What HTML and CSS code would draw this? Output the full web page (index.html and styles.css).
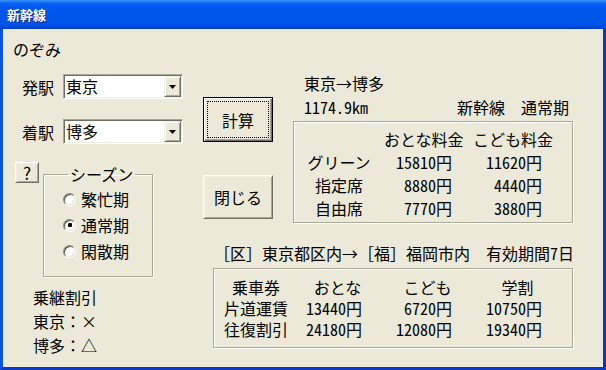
FILE: index.html
```html
<!DOCTYPE html>
<html lang="ja">
<head>
    <meta charset="UTF-8">
    <title>新幹線</title>
    <link rel="stylesheet" href="styles.css">
</head>
<body>
<div class="window">
    <div class="titlebar">新幹線</div>
    <div class="client">
        <div class="left">
            <div class="train">のぞみ</div>

            <div class="station">
                <span class="label">発駅</span>
                <div class="combo">
                    <span class="combo-text">東京</span>
                    <span class="combo-btn"><svg width="7" height="4" viewBox="0 0 7 4"><polygon points="0,0 7,0 3.5,4" fill="#000"/></svg></span>
                </div>
            </div>
            <div class="station">
                <span class="label">着駅</span>
                <div class="combo">
                    <span class="combo-text">博多</span>
                    <span class="combo-btn"><svg width="7" height="4" viewBox="0 0 7 4"><polygon points="0,0 7,0 3.5,4" fill="#000"/></svg></span>
                </div>
            </div>

            <div class="season-row">
                <button type="button" class="btn help num">?</button>
                <fieldset class="season">
                    <legend>シーズン</legend>
                    <label class="radio"><span class="dot"></span>繁忙期</label>
                    <label class="radio checked"><span class="dot"></span>通常期</label>
                    <label class="radio"><span class="dot"></span>閑散期</label>
                </fieldset>
            </div>

            <div class="transfer">
                <div>乗継割引</div>
                <div>東京：×</div>
                <div>博多：△</div>
            </div>
        </div>

        <div class="main">
            <div class="upper">
                <div class="buttons">
                    <button type="button" class="btn calc"><span class="focus">計算</span></button>
                    <button type="button" class="btn close">閉じる</button>
                </div>
                <div class="info">
                    <div class="route">東京→博多</div>
                    <div class="dist"><span class="num">1174.9km</span><span>新幹線　通常期</span></div>
                    <div class="box fare">
                        <span></span>
                        <span class="hd-adult">おとな料金</span>
                        <span class="hd-child">こども料金</span>

                        <span class="c">グリーン</span>
                        <span class="v2 num">15810円</span>
                        <span class="v3 num">11620円</span>

                        <span class="c">指定席</span>
                        <span class="v2 num">8880円</span>
                        <span class="v3 num">4440円</span>

                        <span class="c">自由席</span>
                        <span class="v2 num">7770円</span>
                        <span class="v3 num">3880円</span>
                    </div>
                </div>
            </div>

            <div class="area">［区］東京都区内→［福］福岡市内　有効期間<span class="num">7</span>日</div>

            <div class="box ticket">
                <span class="c">乗車券</span>
                <span class="c">おとな</span>
                <span class="c">こども</span>
                <span class="c">学割</span>

                <span class="c">片道運賃</span>
                <span class="t2 num">13440円</span>
                <span class="t3 num">6720円</span>
                <span class="t4 num">10750円</span>

                <span class="c">往復割引</span>
                <span class="t2 num">24180円</span>
                <span class="t3 num">12080円</span>
                <span class="t4 num">19340円</span>
            </div>
        </div>
    </div>
</div>
</body>
</html>
```

FILE: styles.css
```css
* {
    box-sizing: border-box;
}

html, body {
    margin: 0;
    padding: 0;
}

body {
    font-family: "Noto Sans CJK JP", "Liberation Sans", sans-serif;
    font-size: 16px;
    line-height: 20px;
    color: #000;
    background: #fff;
}

/* half-width latin, like the old bitmap UI font */
.num {
    font-feature-settings: "hwid";
}

.window {
    width: 606px;
    height: 370px;
    display: flex;
    flex-direction: column;
}

.titlebar {
    height: 29px;
    padding-left: 7px;
    line-height: 30px;
    font-size: 13px;
    font-weight: bold;
    color: #fff;
    text-shadow: 1px 1px #0a1e8c;
    background: linear-gradient(to bottom, #3d95ff 0, #0a66f7 3px, #0058ee 7px, #0055ea 16px, #0056ec 24px, #0047d9 27px, #003cc8 29px);
}

.client {
    flex: 1;
    display: flex;
    background: #ece9d8;
    border: 3px solid #0b55e2;
    border-top: 0;
    border-right-color: #0637c9;
    border-bottom-color: #0a3ad0;
}

/* left column */
.left {
    width: 200px;
    padding-left: 10px;
}

.train {
    margin-top: 10px;
}

.station {
    display: flex;
    align-items: center;
    margin-left: 9px;
    margin-top: 15px;
}

.station + .station {
    margin-top: 20px;
}

.label {
    width: 41px;
}

.combo {
    width: 120px;
    height: 25px;
    display: flex;
    padding: 1px;
    background: #fff;
    border: 1px solid;
    border-color: #aca899 #fff #fff #aca899;
    box-shadow: inset 1px 1px #716f64, inset -1px -1px #f1efe2;
}

.combo-text {
    flex: 1;
    padding-left: 1px;
    line-height: 21px;
}

.combo-btn {
    width: 17px;
    display: flex;
    align-items: center;
    justify-content: center;
    background: #ece9d8;
    border: 1px solid;
    border-color: #f1efe2 #716f64 #716f64 #f1efe2;
    box-shadow: inset 1px 1px #fff, inset -1px -1px #aca899;
}

.season-row {
    display: flex;
    align-items: flex-start;
    margin-top: 18px;
    margin-left: 2px;
}

.btn {
    font: inherit;
    color: #000;
    background: #ece9d8;
    padding: 0;
    border: 1px solid;
    border-color: #fff #716f64 #716f64 #fff;
    box-shadow: inset 1px 1px #f1efe2, inset -1px -1px #aca899;
    display: flex;
    align-items: center;
    justify-content: center;
}

.help {
    width: 24px;
    height: 21px;
    margin-right: 4px;
    line-height: 19px;
    font-size: 17px;
}

.season {
    width: 110px;
    margin: 0;
    padding: 0 0 12px 19px;
    border: 1px solid #aca899;
    box-shadow: inset 1px 1px #fff, 1px 1px #fff;
}

.season legend {
    margin-left: 5px;
    padding: 0 2px;
    line-height: 24px;
}

.radio {
    display: flex;
    align-items: center;
    gap: 5px;
    height: 26px;
}

.dot {
    width: 13px;
    height: 13px;
    border-radius: 50%;
    background: #fff;
    border: 1px solid;
    border-color: #8a8878 #fff #fff #8a8878;
    box-shadow: inset 1px 1px #55534a, inset -1px -1px #e2dfd0;
    display: flex;
    align-items: center;
    justify-content: center;
}

.radio.checked .dot::after {
    content: "";
    width: 4px;
    height: 4px;
    background: #000;
    border-radius: 1px;
}

.transfer {
    margin-left: 20px;
    margin-top: 8px;
    line-height: 24px;
}

/* right side */
.main {
    flex: 1;
}

.upper {
    display: flex;
}

.buttons {
    width: 90px;
    display: flex;
    flex-direction: column;
    align-items: flex-start;
}

.calc {
    margin-top: 68px;
    width: 70px;
    height: 45px;
    border-color: #000;
    box-shadow: inset 1px 1px #fff, inset -1px -1px #716f64, inset -2px -2px #aca899;
    align-items: stretch;
}

.calc .focus {
    flex: 1;
    margin: 3px;
    border: 1px dotted #000;
    display: flex;
    align-items: center;
    justify-content: center;
}

.close {
    margin-top: 33px;
    width: 70px;
    height: 44px;
}

.info {
    width: 280px;
}

.route {
    margin-top: 42px;
    padding-left: 11px;
    line-height: 24px;
}

.dist {
    display: flex;
    justify-content: space-between;
    padding-left: 11px;
    padding-right: 4px;
    line-height: 24px;
}

.box {
    border: 1px solid #aca899;
    box-shadow: inset 1px 1px #fff, 1px 1px #fff;
    display: grid;
    align-content: start;
}

.fare {
    margin-top: 2px;
    height: 102px;
    padding-top: 6px;
    line-height: 23px;
    grid-template-columns: 90px 80px 92px;
}

.c {
    text-align: center;
}

.hd-adult {
    text-align: left;
}

.hd-child {
    text-align: right;
    padding-right: 3px;
}

.v2 {
    text-align: right;
    padding-right: 12px;
}

.v3 {
    text-align: right;
    padding-right: 14px;
}

.area {
    margin-top: 20px;
    margin-left: 11px;
}

.ticket {
    margin-top: 5px;
    margin-left: 10px;
    width: 360px;
    height: 80px;
    padding-top: 8px;
    line-height: 21px;
    grid-template-columns: 84px 79px 101px 79px;
}

.t2,
.t4 {
    text-align: right;
    padding-right: 15px;
}

.t3 {
    text-align: right;
    padding-right: 26px;
}
```
